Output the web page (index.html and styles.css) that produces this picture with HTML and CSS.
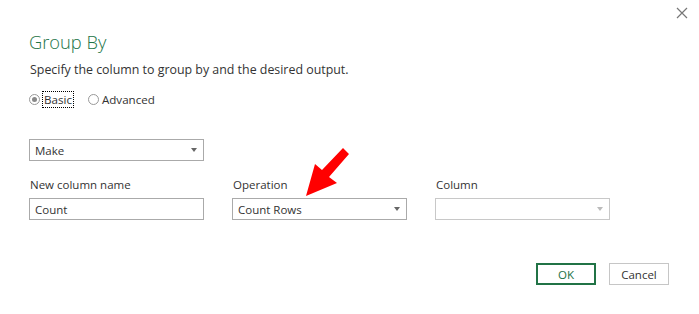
FILE: index.html
```html
<!DOCTYPE html>
<html lang="en">
<head>
  <meta charset="UTF-8">
  <title>Group By</title>
  <link rel="stylesheet" href="styles.css">
</head>
<body>
  <!-- Dialog window -->
  <div class="dialog">
    <!-- Close button in top right -->
    <button class="close-btn" title="Close">
      <svg width="12" height="12" viewBox="0 0 12 12">
        <path d="M1 1 L11 11 M11 1 L1 11" stroke="#777" stroke-width="1.2" fill="none"/>
      </svg>
    </button>

    <h1 class="title">Group By</h1>
    <p class="subtitle">Specify the column to group by and the desired output.</p>

    <!-- Basic / Advanced choice -->
    <div class="mode-row">
      <label class="radio">
        <span class="radio-dot checked"></span>
        <span class="radio-text focused">Basic</span>
      </label>
      <label class="radio">
        <span class="radio-dot"></span>
        <span class="radio-text">Advanced</span>
      </label>
    </div>

    <!-- Column to group by -->
    <div class="select group-select">
      <span>Make</span>
      <span class="caret"></span>
    </div>

    <!-- Output fields -->
    <div class="fields">
      <div class="field">
        <div class="field-label">New column name</div>
        <div class="input"><span>Count</span></div>
      </div>
      <div class="field">
        <div class="field-label">Operation</div>
        <div class="select"><span>Count Rows</span><span class="caret"></span></div>
      </div>
      <div class="field">
        <div class="field-label">Column</div>
        <div class="select disabled"><span></span><span class="caret"></span></div>
      </div>
    </div>

    <!-- OK / Cancel -->
    <div class="buttons">
      <button class="btn ok">OK</button>
      <button class="btn">Cancel</button>
    </div>

    <!-- Red arrow pointing at the Operation box -->
    <svg class="pointer" width="699" height="314" viewBox="0 0 699 314">
      <polygon fill="#ff0000" points="306,196 315,164 322,170 343,148 349,154 329,177 337,183"/>
    </svg>
  </div>
</body>
</html>
```

FILE: styles.css
```css
/* Page reset */
body {
  margin: 0;
  font-family: "Segoe UI", "Open Sans", sans-serif;
  font-size: 11.5px;
  color: #333;
  background: #fff;
}

/* Dialog box fills the window */
.dialog {
  position: relative;
  width: 699px;
  height: 314px;
  padding: 0 0 0 29px;
  box-sizing: border-box;
}

.close-btn {
  position: absolute;
  top: 7px;
  right: 10px;
  background: none;
  border: none;
  padding: 0;
  width: 14px;
  height: 14px;
  cursor: pointer;
}

/* Heading */
.title {
  margin: 0;
  padding-top: 28px;
  font-size: 18.3px;
  font-weight: 300;
  line-height: 27px;
  color: #217346;
}

.subtitle {
  margin: 6px 0 0 1px;
  font-size: 12.4px;
  line-height: 18px;
  color: #333;
}

/* Radio buttons */
.mode-row {
  display: flex;
  align-items: center;
  gap: 15px;
  margin-top: 12px;
  height: 17px;
}

.radio {
  display: flex;
  align-items: center;
  gap: 3px;
  font-size: 11.6px;
  color: #333;
}

.radio-dot {
  width: 9px;
  height: 9px;
  border: 1px solid #999;
  border-radius: 50%;
  display: inline-block;
  position: relative;
}

.radio-dot.checked::after {
  content: "";
  position: absolute;
  top: 2px;
  left: 2px;
  width: 5px;
  height: 5px;
  border-radius: 50%;
  background: #888;
}

.radio-text.focused {
  outline: 1px dotted #000;
  padding: 0 1px;
}

/* Dropdowns and text boxes */
.select,
.input {
  width: 175px;
  height: 22px;
  box-sizing: border-box;
  border: 1px solid #aaa;
  display: flex;
  align-items: center;
  justify-content: space-between;
  padding: 0 6px 0 5px;
  font-size: 11.5px;
  color: #333;
}

.group-select {
  margin-top: 31px;
}

.select.disabled {
  border-color: #c8c8c8;
}

/* Small down triangle */
.caret {
  width: 0;
  height: 0;
  border-left: 3.5px solid transparent;
  border-right: 3.5px solid transparent;
  border-top: 4px solid #666;
}

.select.disabled .caret {
  border-top-color: #bbb;
}

.fields {
  display: flex;
  gap: 28px;
  margin-top: 15px;
}

.field-label {
  font-size: 11.5px;
  line-height: 18px;
  margin: 0 0 4px 1px;
  color: #333;
}

/* Bottom buttons */
.buttons {
  display: flex;
  justify-content: flex-end;
  gap: 13px;
  margin: 43px 30px 0 0;
}

.btn {
  width: 60px;
  height: 22px;
  box-sizing: border-box;
  background: #fff;
  border: 1px solid #c6c6c6;
  font-family: inherit;
  font-size: 11.5px;
  color: #333;
  padding: 0;
}

.btn.ok {
  border: 2px solid #217346;
  color: #217346;
}

/* Annotation arrow drawn over the dialog */
.pointer {
  position: absolute;
  top: 0;
  left: 0;
  pointer-events: none;
}
```
